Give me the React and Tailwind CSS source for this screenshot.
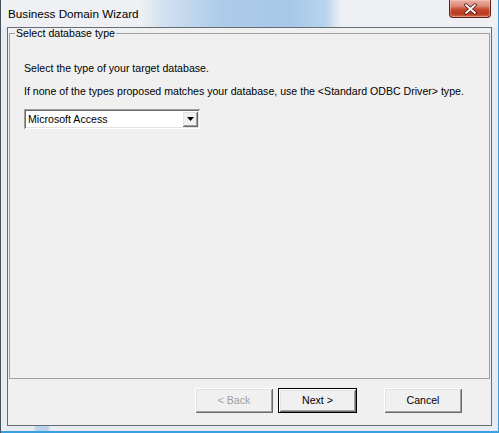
import React from "react";

const raised =
  "shadow-[inset_1px_1px_0_#ffffff,inset_-1px_-1px_0_#696969,inset_2px_2px_0_#e3e3e3,inset_-2px_-2px_0_#a0a0a0]";

function CloseButton() {
  return (
    <button className="absolute top-0 right-[7px] w-[42px] h-[18px] flex items-center justify-center rounded-b-[4px] border border-t-0 border-[#5e2014] bg-[linear-gradient(180deg,#eab0a2_0%,#dc8a78_35%,#c8492f_55%,#b83a22_80%,#d26a48_100%)] shadow-[inset_0_0_0_1px_rgba(255,210,200,0.45)]">
      <svg width="15" height="12" viewBox="0 0 15 12">
        <path d="M3 2 L12 10 M12 2 L3 10" stroke="#4a1a10" strokeWidth="3.4" strokeLinecap="round" />
        <path d="M3 2 L12 10 M12 2 L3 10" stroke="#ffffff" strokeWidth="1.8" strokeLinecap="round" />
      </svg>
    </button>
  );
}

function WizButton({ children, disabled, isDefault }) {
  if (isDefault) {
    return (
      <div className="w-[79px] h-[25px] border border-black">
        <button className={`w-full h-full bg-[#f0f0f0] text-black ${raised}`}>{children}</button>
      </div>
    );
  }
  return (
    <button
      className={`w-[78px] h-[25px] bg-[#f0f0f0] ${raised} ${disabled ? "text-[#a0a0a0]" : "text-black"}`}
    >
      {children}
    </button>
  );
}

export default function App() {
  return (
    <div className="w-[499px] h-[433px] flex flex-col bg-[#e6ecf2] border-l border-[#44505c] border-r-[#3b9fe2] border-r font-['Liberation_Sans',Arial,sans-serif] text-[10.6px] leading-[13px] text-black overflow-hidden">
      {/* title bar */}
      <div className="relative h-[27px] shrink-0 flex items-center pl-[7px] bg-[linear-gradient(90deg,#eef0f3_0px,#eef0f3_140px,#cfe0f0_165px,#aecbe9_220px,#a8c7e8_290px,#b9d3ee_325px,#eef0f3_340px,#eef0f3_100%)]">
        <span className="text-[11.7px] leading-[14px] text-black">Business Domain Wizard</span>
        <CloseButton />
      </div>

      {/* client */}
      <div className="flex-1 flex px-[6px]">
        <div className="flex-1 flex flex-col border border-[#646c74] bg-[#f0f0f0]">
          <fieldset className="h-[351px] mx-[1px] border border-[#a0a0a0] pl-[14px]">
            <legend className="-ml-[9px] px-[1px] leading-[11px]">Select database type</legend>
            <p className="mt-[23px]">Select the type of your target database.</p>
            <p className="mt-[10px]">
              If none of the types proposed matches your database, use the &lt;Standard ODBC Driver&gt; type.
            </p>
            <div className="mt-[11px] w-[176px] h-[20px] flex items-center bg-white p-[2px] shadow-[inset_1px_1px_0_#a0a0a0,inset_-1px_-1px_0_#ffffff,inset_2px_2px_0_#696969,inset_-2px_-2px_0_#e3e3e3]">
              <span className="flex-1 pl-[2px]">Microsoft Access</span>
              <div className={`w-[16px] h-[16px] flex items-center justify-center bg-[#f0f0f0] ${raised}`}>
                <svg width="7" height="4" viewBox="0 0 7 4">
                  <path d="M0 0 H7 L3.5 4 Z" fill="#000" />
                </svg>
              </div>
            </div>
          </fieldset>

          <div className="flex justify-end items-start pt-[9px] pr-[29px]">
            <WizButton disabled>&lt; Back</WizButton>
            <div className="ml-[5px]">
              <WizButton isDefault>Next &gt;</WizButton>
            </div>
            <div className="ml-[27px]">
              <WizButton>Cancel</WizButton>
            </div>
          </div>
        </div>
      </div>

      {/* bottom frame */}
      <div className="h-[7px] shrink-0 border-b-2 border-b-[#3a9fe2] bg-[linear-gradient(90deg,#e6ecf2_0px,#e6ecf2_32px,#b8d2ec_36px,#b8d2ec_46px,#e6ecf2_50px,#e6ecf2_100%)]" />
    </div>
  );
}
